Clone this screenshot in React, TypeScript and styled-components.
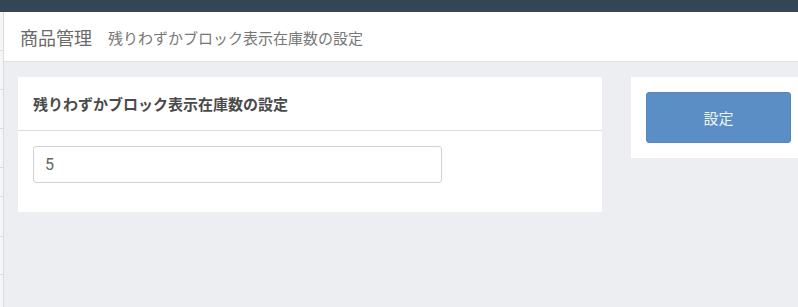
import React from "react";
import styled, { createGlobalStyle } from "styled-components";

const GlobalStyle = createGlobalStyle`
    html, body {
        margin: 0;
        padding: 0;
        overflow: hidden;
        background: #edeef2;
        font-family: "Open Sans", "Noto Sans CJK JP", sans-serif;
    }
`;

const SPage = styled.div`
    width: 798px;
    height: 307px;
    display: flex;
    flex-direction: column;
`;

const STopBar = styled.div`
    height: 12px;
    background: #344556;
    flex-shrink: 0;
`;

const SBody = styled.div`
    flex: 1;
    display: flex;
`;

const SSidebar = styled.nav`
    width: 3px;
    background: #f6f6f7;
    border-right: 1px solid #d9dadd;
    display: flex;
    flex-direction: column;
    padding-top: 38px;
`;

const SSideItem = styled.div<{ $h: number }>`
    height: ${(p) => p.$h}px;
    border-top: 1px solid #dcdcdf;
`;

const SMain = styled.main`
    flex: 1;
    display: flex;
    flex-direction: column;
`;

const SHeader = styled.header`
    height: 49px;
    background: #fff;
    border-bottom: 1px solid #dfe0e3;
    display: flex;
    align-items: center;
    padding-left: 16px;
    gap: 16px;

    h1 {
        margin: 0;
        font-size: 18px;
        font-weight: 400;
        color: #6a6a6a;
    }

    span {
        font-size: 15px;
        color: #777;
        padding-top: 1px;
    }
`;

const SContent = styled.div`
    display: grid;
    grid-template-columns: 584px 1fr;
    column-gap: 29px;
    align-items: start;
    padding: 15px 0 0 14px;
`;

const SCard = styled.section`
    background: #fff;
`;

const SCardHeader = styled.div`
    height: 53px;
    border-bottom: 1px solid #d9dcdf;
    display: flex;
    align-items: center;
    padding-left: 15px;

    h2 {
        margin: 0;
        font-size: 15px;
        font-weight: 700;
        color: #4a4a4a;
    }
`;

const SCardBody = styled.div`
    padding: 15px 15px 29px;
`;

const SInput = styled.input`
    box-sizing: border-box;
    display: block;
    width: 409px;
    height: 37px;
    border: 1px solid #cfd2d6;
    border-radius: 3px;
    padding: 0 11px;
    font-family: Roboto, "Noto Sans CJK JP", sans-serif;
    font-size: 16px;
    color: #666;
    outline: none;
`;

const SActionCard = styled.section`
    background: #fff;
    padding: 15px 7px 15px 15px;
`;

const SButton = styled.button`
    display: block;
    width: 145px;
    height: 51px;
    background: #5b8ec4;
    border: 1px solid #5587bd;
    border-radius: 3px;
    color: #eef3f9;
    font-family: inherit;
    font-size: 15px;
    cursor: pointer;
`;

const sideItems = [38, 38, 38, 28, 39, 37, 37];

const App: React.FC = () => {
    return (
        <SPage>
            <GlobalStyle />
            <STopBar />
            <SBody>
                <SSidebar>
                    {sideItems.map((h, i) => (
                        <SSideItem key={i} $h={h} />
                    ))}
                </SSidebar>
                <SMain>
                    <SHeader>
                        <h1>商品管理</h1>
                        <span>残りわずかブロック表示在庫数の設定</span>
                    </SHeader>
                    <SContent>
                        <SCard>
                            <SCardHeader>
                                <h2>残りわずかブロック表示在庫数の設定</h2>
                            </SCardHeader>
                            <SCardBody>
                                <SInput type="text" defaultValue="5" />
                            </SCardBody>
                        </SCard>
                        <SActionCard>
                            <SButton type="button">設定</SButton>
                        </SActionCard>
                    </SContent>
                </SMain>
            </SBody>
        </SPage>
    );
};

export default App;
